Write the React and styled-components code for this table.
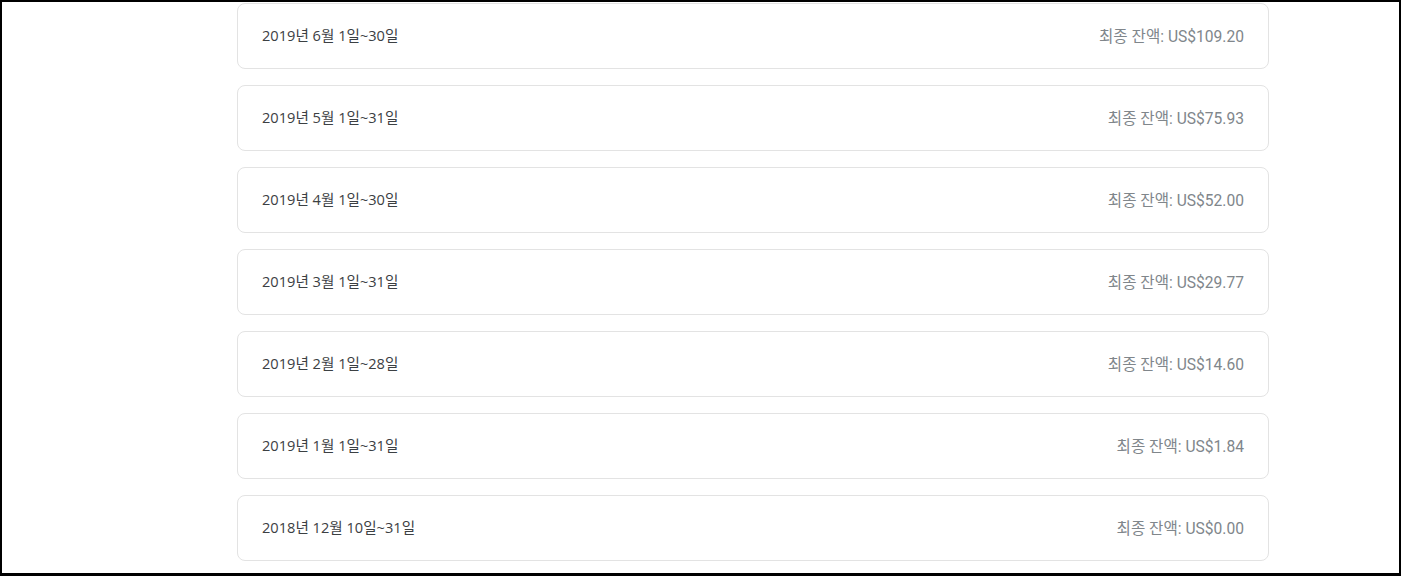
import React from "react";
import styled, { createGlobalStyle } from "styled-components";

const statements = [
  { period: "2019년 6월 1일~30일", balance: "US$109.20" },
  { period: "2019년 5월 1일~31일", balance: "US$75.93" },
  { period: "2019년 4월 1일~30일", balance: "US$52.00" },
  { period: "2019년 3월 1일~31일", balance: "US$29.77" },
  { period: "2019년 2월 1일~28일", balance: "US$14.60" },
  { period: "2019년 1월 1일~31일", balance: "US$1.84" },
  { period: "2018년 12월 10일~31일", balance: "US$0.00" },
];

const App = () => {
  return (
    <>
      <GlobalStyle />
      <Frame>
        <StatementList>
          {statements.map((s) => (
            <StatementCard key={s.period}>
              <Period>{s.period}</Period>
              <Balance>최종 잔액: {s.balance}</Balance>
            </StatementCard>
          ))}
        </StatementList>
      </Frame>
    </>
  );
};

export default App;

const GlobalStyle = createGlobalStyle`
  html, body {
    margin: 0;
    padding: 0;
    background: #fff;
  }
  * {
    box-sizing: border-box;
  }
`;

const Frame = styled.div`
  width: 1401px;
  height: 576px;
  border-style: solid;
  border-color: #000;
  border-width: 2px 2px 3px 2px;
  overflow: hidden;
  background: #fff;
`;

const StatementList = styled.div`
  display: flex;
  flex-direction: column;
  gap: 16px;
  width: 1032px;
  margin-left: 235px;
  padding-top: 1px;
`;

const StatementCard = styled.div`
  display: flex;
  align-items: center;
  justify-content: space-between;
  height: 66px;
  padding: 0 24px 3px;
  border: 1px solid #e3e3e3;
  border-radius: 8px;
  background: #fff;
`;

const Period = styled.span`
  font-family: "Open Sans", "Noto Sans CJK KR", sans-serif;
  font-size: 14.6px;
  color: #3c4043;
`;

const Balance = styled.span`
  font-family: Roboto, "Noto Sans CJK KR", sans-serif;
  font-size: 15.6px;
  color: #80868b;
`;
